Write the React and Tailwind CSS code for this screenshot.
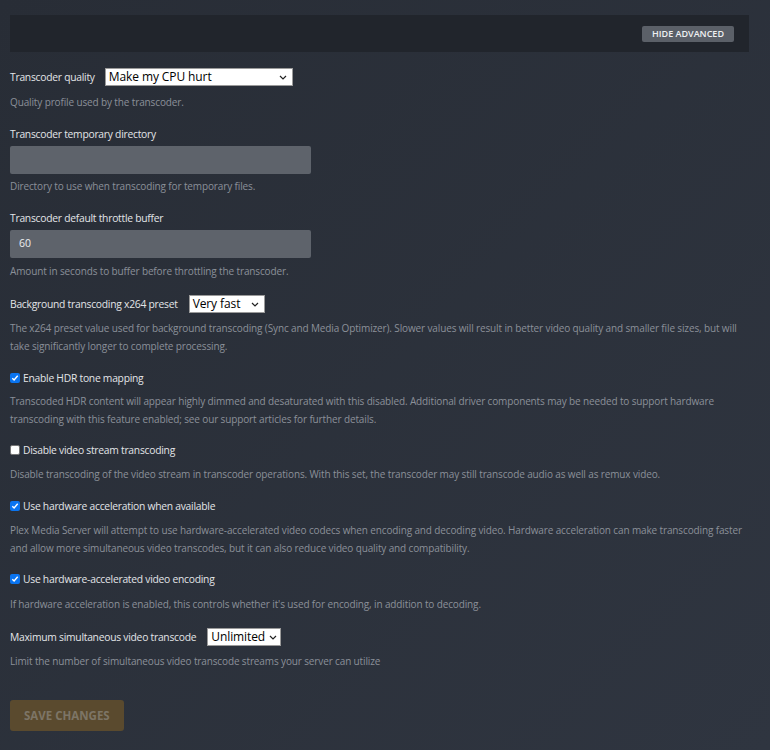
import React, { useState } from 'react';

const font = { fontFamily: '"Open Sans", "Noto Sans", sans-serif' };

const Chevron = () => (
  <svg width="8" height="5" viewBox="0 0 8 5" className="shrink-0">
    <path d="M1 1l3 3 3-3" fill="none" stroke="#222" strokeWidth="1.2" />
  </svg>
);

const SelectBox = ({ value, width }) => (
  <div
    className={`flex h-[18px] items-center justify-between gap-[4px] border border-[#9a9a9a] bg-white pl-[3px] pr-[5px] text-[12px] leading-none text-black ${width}`}
  >
    <span className="tracking-[-0.1px]">{value}</span>
    <Chevron />
  </div>
);

const Check = ({ checked }) =>
  checked ? (
    <span className="flex h-[10px] w-[10px] items-center justify-center rounded-[2px] bg-[#0a74f0]">
      <svg width="8" height="8" viewBox="0 0 8 8">
        <path d="M1.3 4.2l1.8 1.8 3.6-4.2" fill="none" stroke="white" strokeWidth="1.4" />
      </svg>
    </span>
  ) : (
    <span className="h-[10px] w-[10px] rounded-[2px] border border-[#767676] bg-white" />
  );

const Desc = ({ children, className = '' }) => (
  <p className={`text-[10px] leading-[18px] tracking-[-0.13px] text-[#8b9099] ${className}`}>{children}</p>
);

const Label = ({ children, className = '' }) => (
  <span className={`text-[10.3px] leading-[18px] tracking-[-0.25px] text-[#e3e5e8] ${className}`}>
    {children}
  </span>
);

const CheckRow = ({ checked, label }) => (
  <div className="flex h-[18px] items-center gap-[3px]">
    <Check checked={checked} />
    <Label>{label}</Label>
  </div>
);

const TextField = ({ value }) => (
  <div className="mt-[3px] flex h-7 w-[301px] items-center rounded-[2px] bg-[#5e636b] px-[9px] text-[10.5px] text-[#eceef0]">
    {value}
  </div>
);

export default function App() {
  const [advanced] = useState(true);

  return (
    <div
      className="min-h-[750px] w-full bg-gradient-to-br from-[#282d36] to-[#2f3540] pl-[10px] pr-[21px] pt-[15px]"
      style={font}
    >
      <div className="flex h-[37px] items-center justify-end bg-[#21252c] pr-[15px]">
        <button className="h-4 rounded-[2px] bg-[#5b6068] px-[10px] text-[9px] font-semibold uppercase leading-4 text-[#eef0f2]">
          {advanced ? 'Hide Advanced' : 'Show Advanced'}
        </button>
      </div>

      <div className="mt-4 flex flex-col">
        {/* quality profile */}
        <div className="flex h-[18px] items-center gap-[10px]">
          <Label>Transcoder quality</Label>
          <SelectBox value="Make my CPU hurt" width="w-[188px]" />
        </div>
        <Desc className="mt-[7px]">Quality profile used by the transcoder.</Desc>

        <Label className="mt-[14px] block">Transcoder temporary directory</Label>
        <TextField value="" />
        <Desc className="mt-[3px]">Directory to use when transcoding for temporary files.</Desc>

        <Label className="mt-[14px] block">Transcoder default throttle buffer</Label>
        <TextField value="60" />
        <Desc className="mt-[4px]">Amount in seconds to buffer before throttling the transcoder.</Desc>

        <div className="mt-[15px] flex h-[18px] items-center gap-[11px]">
          <Label>Background transcoding x264 preset</Label>
          <SelectBox value="Very fast" width="w-[76px]" />
        </div>
        <Desc className="mt-[6px]">
          The x264 preset value used for background transcoding (Sync and Media Optimizer). Slower values will
          result in better video quality and smaller file sizes, but will take significantly longer to complete
          processing.
        </Desc>

        <div className="mt-[14px]">
          <CheckRow checked label="Enable HDR tone mapping" />
        </div>
        <Desc className="mt-[5px]">
          Transcoded HDR content will appear highly dimmed and desaturated with this disabled. Additional driver
          components may be needed to support hardware transcoding with this feature enabled; see our support
          articles for further details.
        </Desc>

        <div className="mt-[13px]">
          <CheckRow checked={false} label="Disable video stream transcoding" />
        </div>
        <Desc className="mt-[6px]">
          Disable transcoding of the video stream in transcoder operations. With this set, the transcoder may still
          transcode audio as well as remux video.
        </Desc>

        <div className="mt-[14px]">
          <CheckRow checked label="Use hardware acceleration when available" />
        </div>
        <Desc className="mt-[6px]">
          Plex Media Server will attempt to use hardware-accelerated video codecs when encoding and decoding video.
          Hardware acceleration can make transcoding faster and allow more simultaneous video transcodes, but it can
          also reduce video quality and compatibility.
        </Desc>

        <div className="mt-[13px]">
          <CheckRow checked label="Use hardware-accelerated video encoding" />
        </div>
        <Desc className="mt-[7px]">
          If hardware acceleration is enabled, this controls whether it's used for encoding, in addition to decoding.
        </Desc>

        <div className="mt-[15px] flex h-[18px] items-center gap-[11px]">
          <Label>Maximum simultaneous video transcode</Label>
          <SelectBox value="Unlimited" width="w-[74px]" />
        </div>
        <Desc className="mt-[6px]">
          Limit the number of simultaneous video transcode streams your server can utilize
        </Desc>

        <div className="mt-[30px]">
          <button
            disabled
            className="h-[31px] rounded-[3px] bg-[#5a4a2e] px-[14px] text-[11.5px] font-bold uppercase text-[#7d7566]"
          >
            Save Changes
          </button>
        </div>
      </div>
    </div>
  );
}
